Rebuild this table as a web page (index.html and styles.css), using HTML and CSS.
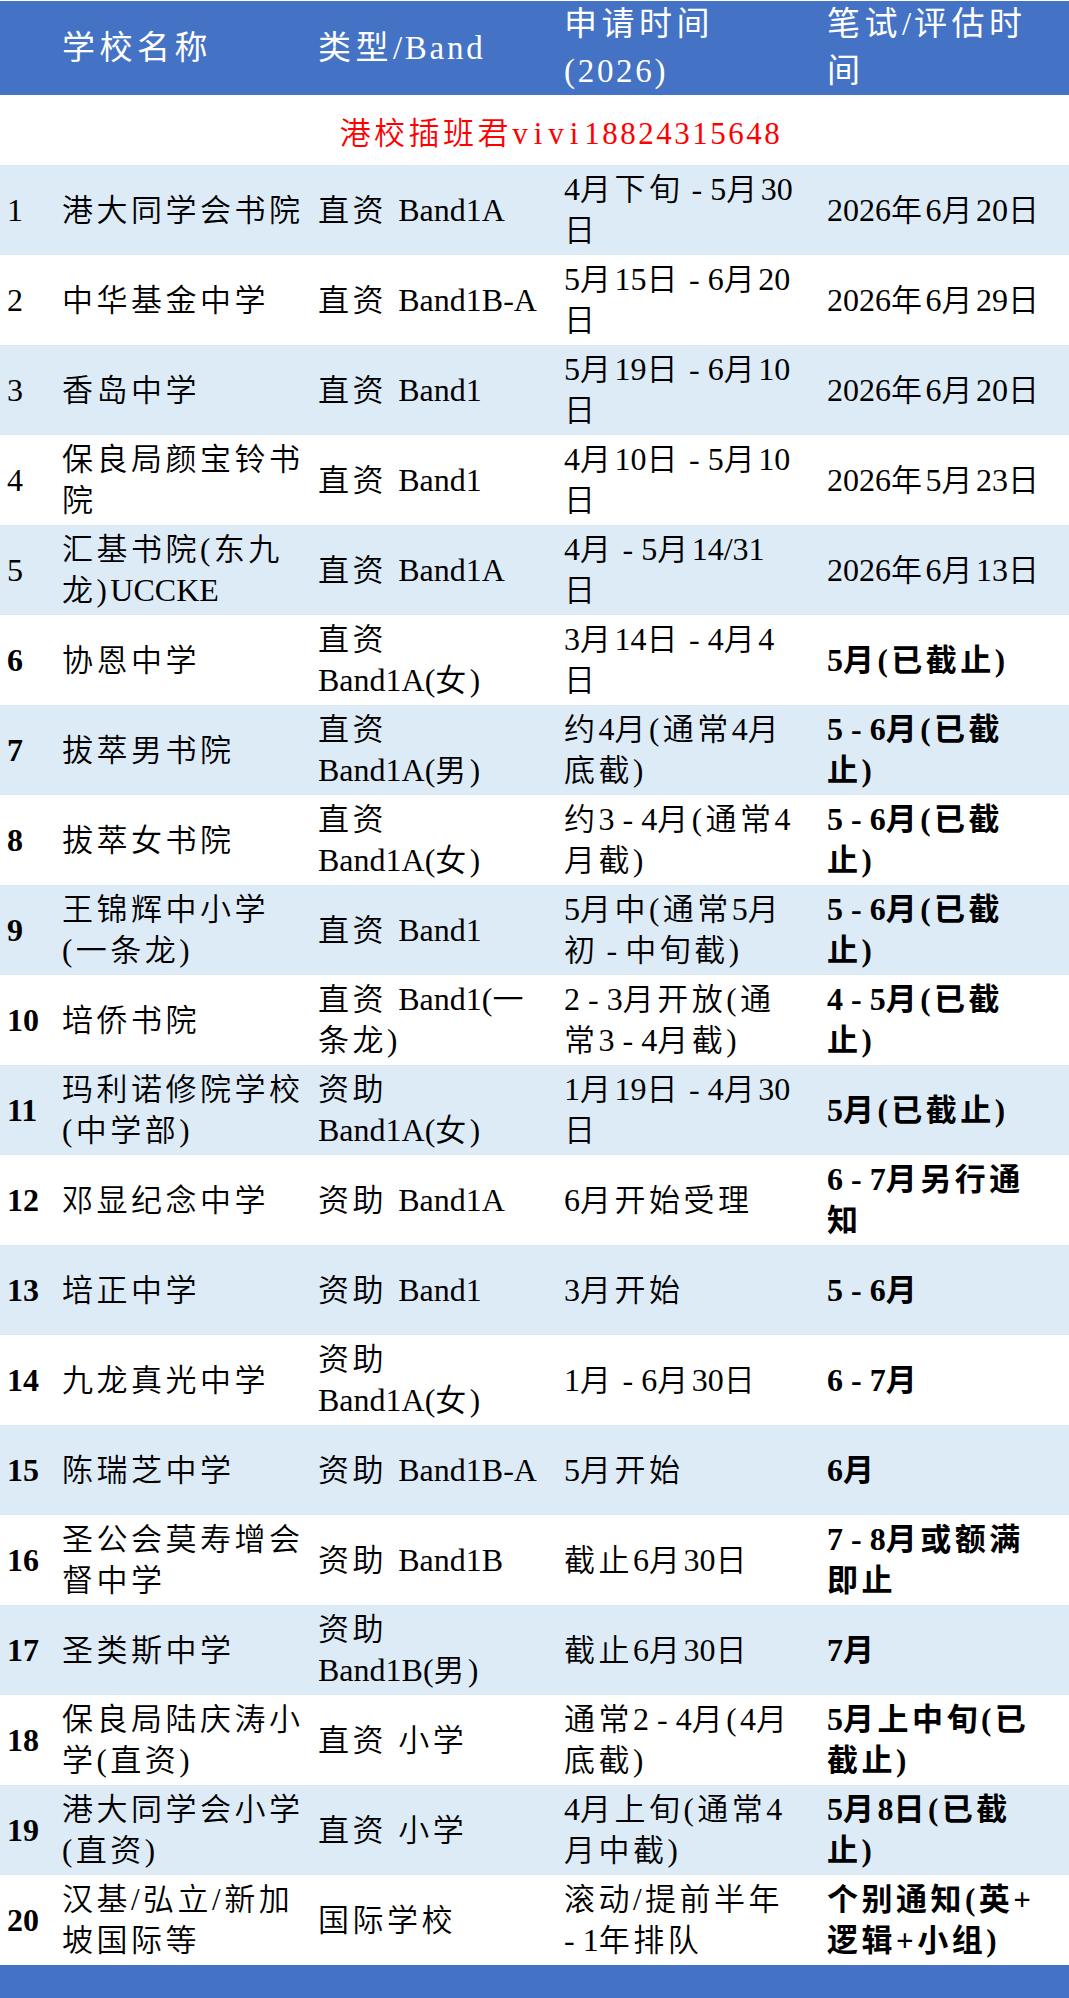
FILE: index.html
```html
<!DOCTYPE html>
<html lang="zh-CN">
<head>
<meta charset="utf-8">
<title>港校插班时间表</title>
<link rel="stylesheet" href="styles.css">
</head>
<body>
<table class="sheet">
  <colgroup>
    <col class="c-no"><col class="c-name"><col class="c-type"><col class="c-app"><col class="c-exam">
  </colgroup>
  <thead>
    <tr class="head">
      <th></th>
      <th>学校名称</th>
      <th>类型<span class="hl">/Band</span></th>
      <th>申请时间<br><span class="hl">(2026)</span></th>
      <th>笔试<span class="hl">/</span>评估时<br>间</th>
    </tr>
    <tr class="promo">
      <td colspan="5">港校插班君<span class="vv">vivi</span><span class="ph">18824315648</span></td>
    </tr>
  </thead>
  <tbody>
    <tr><td><span class="l">1</span></td><td>港大同学会书院</td><td>直资 <span class="l">Band1A</span></td><td><span class="l">4</span>月下旬<span class="l"> - 5</span>月<span class="l">30</span><br>日</td><td><span class="l">2026</span>年<span class="l">6</span>月<span class="l">20</span>日</td></tr>
    <tr><td><span class="l">2</span></td><td>中华基金中学</td><td>直资 <span class="l">Band1B-A</span></td><td><span class="l">5</span>月<span class="l">15</span>日<span class="l"> - 6</span>月<span class="l">20</span><br>日</td><td><span class="l">2026</span>年<span class="l">6</span>月<span class="l">29</span>日</td></tr>
    <tr><td><span class="l">3</span></td><td>香岛中学</td><td>直资 <span class="l">Band1</span></td><td><span class="l">5</span>月<span class="l">19</span>日<span class="l"> - 6</span>月<span class="l">10</span><br>日</td><td><span class="l">2026</span>年<span class="l">6</span>月<span class="l">20</span>日</td></tr>
    <tr><td><span class="l">4</span></td><td>保良局颜宝铃书<br>院</td><td>直资 <span class="l">Band1</span></td><td><span class="l">4</span>月<span class="l">10</span>日<span class="l"> - 5</span>月<span class="l">10</span><br>日</td><td><span class="l">2026</span>年<span class="l">5</span>月<span class="l">23</span>日</td></tr>
    <tr><td><span class="l">5</span></td><td>汇基书院(东九<br>龙)<span class="l">UCCKE</span></td><td>直资 <span class="l">Band1A</span></td><td><span class="l">4</span>月<span class="l"> - 5</span>月<span class="l">14/31</span><br>日</td><td><span class="l">2026</span>年<span class="l">6</span>月<span class="l">13</span>日</td></tr>
    <tr><td class="b"><span class="l">6</span></td><td>协恩中学</td><td>直资<br><span class="l">Band1A(</span>女)</td><td><span class="l">3</span>月<span class="l">14</span>日<span class="l"> - 4</span>月<span class="l">4</span><br>日</td><td class="b"><span class="l">5</span>月(已截止)</td></tr>
    <tr><td class="b"><span class="l">7</span></td><td>拔萃男书院</td><td>直资<br><span class="l">Band1A(</span>男)</td><td>约<span class="l">4</span>月(通常<span class="l">4</span>月<br>底截)</td><td class="b"><span class="l">5 - 6</span>月(已截<br>止)</td></tr>
    <tr><td class="b"><span class="l">8</span></td><td>拔萃女书院</td><td>直资<br><span class="l">Band1A(</span>女)</td><td>约<span class="l">3 - 4</span>月(通常<span class="l">4</span><br>月截)</td><td class="b"><span class="l">5 - 6</span>月(已截<br>止)</td></tr>
    <tr><td class="b"><span class="l">9</span></td><td>王锦辉中小学<br>(一条龙)</td><td>直资 <span class="l">Band1</span></td><td><span class="l">5</span>月中(通常<span class="l">5</span>月<br>初<span class="l"> - </span>中旬截)</td><td class="b"><span class="l">5 - 6</span>月(已截<br>止)</td></tr>
    <tr><td class="b"><span class="l">10</span></td><td>培侨书院</td><td>直资 <span class="l">Band1(</span>一<br>条龙)</td><td><span class="l">2 - 3</span>月开放(通<br>常<span class="l">3 - 4</span>月截)</td><td class="b"><span class="l">4 - 5</span>月(已截<br>止)</td></tr>
    <tr><td class="b"><span class="l">11</span></td><td>玛利诺修院学校<br>(中学部)</td><td>资助<br><span class="l">Band1A(</span>女)</td><td><span class="l">1</span>月<span class="l">19</span>日<span class="l"> - 4</span>月<span class="l">30</span><br>日</td><td class="b"><span class="l">5</span>月(已截止)</td></tr>
    <tr><td class="b"><span class="l">12</span></td><td>邓显纪念中学</td><td>资助 <span class="l">Band1A</span></td><td><span class="l">6</span>月开始受理</td><td class="b"><span class="l">6 - 7</span>月另行通<br>知</td></tr>
    <tr><td class="b"><span class="l">13</span></td><td>培正中学</td><td>资助 <span class="l">Band1</span></td><td><span class="l">3</span>月开始</td><td class="b"><span class="l">5 - 6</span>月</td></tr>
    <tr><td class="b"><span class="l">14</span></td><td>九龙真光中学</td><td>资助<br><span class="l">Band1A(</span>女)</td><td><span class="l">1</span>月<span class="l"> - 6</span>月<span class="l">30</span>日</td><td class="b"><span class="l">6 - 7</span>月</td></tr>
    <tr><td class="b"><span class="l">15</span></td><td>陈瑞芝中学</td><td>资助 <span class="l">Band1B-A</span></td><td><span class="l">5</span>月开始</td><td class="b"><span class="l">6</span>月</td></tr>
    <tr><td class="b"><span class="l">16</span></td><td>圣公会莫寿增会<br>督中学</td><td>资助 <span class="l">Band1B</span></td><td>截止<span class="l">6</span>月<span class="l">30</span>日</td><td class="b"><span class="l">7 - 8</span>月或额满<br>即止</td></tr>
    <tr><td class="b"><span class="l">17</span></td><td>圣类斯中学</td><td>资助<br><span class="l">Band1B(</span>男)</td><td>截止<span class="l">6</span>月<span class="l">30</span>日</td><td class="b"><span class="l">7</span>月</td></tr>
    <tr><td class="b"><span class="l">18</span></td><td>保良局陆庆涛小<br>学(直资)</td><td>直资 小学</td><td>通常<span class="l">2 - 4</span>月(<span class="l">4</span>月<br>底截)</td><td class="b"><span class="l">5</span>月上中旬(已<br>截止)</td></tr>
    <tr><td class="b"><span class="l">19</span></td><td>港大同学会小学<br>(直资)</td><td>直资 小学</td><td><span class="l">4</span>月上旬(通常<span class="l">4</span><br>月中截)</td><td class="b"><span class="l">5</span>月<span class="l">8</span>日(已截<br>止)</td></tr>
    <tr><td class="b"><span class="l">20</span></td><td>汉基/弘立/新加<br>坡国际等</td><td>国际学校</td><td>滚动/提前半年<br><span class="l"> - 1</span>年排队</td><td class="b">个别通知(英+<br>逻辑+小组)</td></tr>
  </tbody>
  <tfoot>
    <tr class="foot"><td colspan="5"></td></tr>
  </tfoot>
</table>
</body>
</html>
```

FILE: styles.css
```css
html, body {
  margin: 0;
  padding: 0;
  background: #ffffff;
}

.sheet {
  width: 1069px;
  margin-top: 1px;
  border-collapse: collapse;
  border-spacing: 0;
  table-layout: fixed;
  font-family: "Liberation Serif", "Noto Sans CJK SC", serif;
  color: #000000;
}

.c-no { width: 58px; }
.c-name { width: 256px; }
.c-type { width: 246px; }
.c-app { width: 263px; }
.c-exam { width: 246px; }

.sheet th,
.sheet td {
  padding: 0 0 0 4px;
  white-space: nowrap;
  vertical-align: middle;
  text-align: left;
  overflow: hidden;
}

tbody td:first-child {
  padding-left: 7px;
}

.head th {
  height: 93px;
  background: #4472c4;
  color: #ffffff;
  font-weight: normal;
  font-size: 33px;
  letter-spacing: 4.5px;
  line-height: 47px;
}

.hl {
  letter-spacing: 2.7px;
}

.promo td {
  height: 70px;
  padding-left: 53px;
  text-align: center;
  color: #ff0000;
  font-size: 31px;
  letter-spacing: 3.5px;
  font-weight: 350;
}

.vv {
  letter-spacing: 6px;
}

.ph {
  letter-spacing: 2.5px;
}

tbody td {
  height: 90px;
  font-size: 31px;
  letter-spacing: 3.5px;
  line-height: 41px;
  font-weight: 350;
}

tbody tr:nth-child(odd) td {
  background: #ddebf7;
}

.l {
  font-size: 32px;
  letter-spacing: 0;
}

tbody td.b {
  font-weight: 700;
}

.foot td {
  height: 34px;
  padding: 0;
  background: #4472c4;
}
```
